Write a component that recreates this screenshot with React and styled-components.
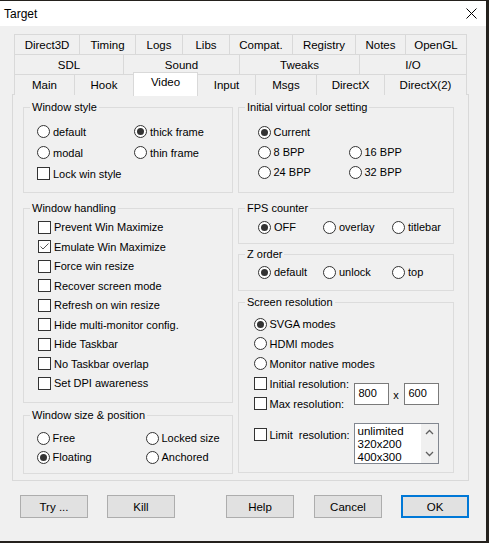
import React from 'react';
import styled, { createGlobalStyle } from 'styled-components';

const GlobalStyle = createGlobalStyle`
  html, body {
    margin: 0;
    padding: 0;
    background: #24211d;
  }
  body {
    font-family: "Liberation Sans", Arial, sans-serif;
    font-size: 11px;
    color: #000;
  }
  * { box-sizing: border-box; }
`;

const Window = styled.div`
  width: 486px;
  height: 540px;
  margin-top: 1px;
  background: #f0f0f0;
  display: flex;
  flex-direction: column;
`;

const TitleBar = styled.div`
  height: 25px;
  background: #fff;
  display: flex;
  align-items: center;
  justify-content: space-between;
  padding: 0 9px 0 4px;
`;

const Title = styled.span`
  font-size: 12px;
  color: #000;
`;

const Body = styled.div`
  flex: 1;
  padding: 8px 0 0 12px;
  display: flex;
  flex-direction: column;
`;

const TabStrip = styled.div`
  margin-left: 2px;
  display: flex;
  flex-direction: column;
`;

const TabRow = styled.div`
  display: flex;
  margin-bottom: -1px;
`;

const Tab = styled.div`
  width: ${(p) => p.$w + 1}px;
  height: ${(p) => (p.$active ? 24 : 21)}px;
  margin-left: -1px;
  margin-top: ${(p) => (p.$active ? -2 : 0)}px;
  margin-bottom: ${(p) => (p.$active ? -2 : 0)}px;
  border: 1px solid #d9d9d9;
  border-bottom: ${(p) => (p.$last ? 'none' : '1px solid #d9d9d9')};
  background: ${(p) => (p.$active ? '#fff' : '#f0f0f0')};
  position: relative;
  z-index: ${(p) => (p.$active ? 2 : 1)};
  display: flex;
  align-items: ${(p) => (p.$active ? 'flex-start' : 'center')};
  padding-top: ${(p) => (p.$active ? 3 : 0)}px;
  justify-content: center;
  font-size: 11.5px;
  &:first-child { margin-left: 0; }
`;

const Page = styled.div`
  width: 457px;
  height: 387px;
  border: 1px solid #d9d9d9;
  padding: 5px 0 0 10px;
  display: flex;
  gap: 5px;
  position: relative;
  z-index: 0;
`;

const Column = styled.div`
  width: ${(p) => p.$w}px;
  display: flex;
  flex-direction: column;
`;

const Group = styled.fieldset`
  margin: ${(p) => p.$mt || 0}px 0 0 0;
  padding: 0;
  border: 1px solid #dcdcdc;
  min-width: 0;
`;

const Legend = styled.legend`
  margin-left: 6px;
  padding: 0 2px;
  line-height: 14px;
  font-size: 11px;
`;

const GroupBody = styled.div`
  padding: ${(p) => p.$pt}px 0 ${(p) => p.$pb}px ${(p) => p.$pl}px;
`;

const Grid = styled.div`
  display: grid;
  grid-template-columns: ${(p) => p.$cols};
`;

const Option = styled.label`
  display: flex;
  align-items: center;
  gap: 3px;
  height: ${(p) => p.$h || 20}px;
  white-space: nowrap;
  font-size: 11px;
`;

const RadioCircle = styled.span`
  width: 13px;
  height: 13px;
  border: 1px solid #333;
  border-radius: 50%;
  background: #fff;
  display: grid;
  place-items: center;
  flex: none;
  &::after {
    content: '';
    width: 7px;
    height: 7px;
    border-radius: 50%;
    background: ${(p) => (p.$on ? '#333' : 'transparent')};
  }
`;

const Box = styled.span`
  width: 13px;
  height: 13px;
  border: 1px solid #333;
  background: #fff;
  display: grid;
  place-items: center;
  flex: none;
`;

const Radio = ({ on, children, h }) => (
  <Option $h={h}>
    <RadioCircle $on={on} />
    {children}
  </Option>
);

const Check = ({ on, children, h }) => (
  <Option $h={h}>
    <Box>
      {on && (
        <svg width="11" height="11" viewBox="0 0 11 11">
          <path d="M1.5 5.5 L4 8 L9.5 2.5" fill="none" stroke="#555" strokeWidth="1" />
        </svg>
      )}
    </Box>
    {children}
  </Option>
);

const ResBlock = styled.div`
  display: flex;
  align-items: center;
`;

const ResLabels = styled.div`
  width: 100px;
  display: flex;
  flex-direction: column;
`;

const NumField = styled.div`
  width: 35px;
  height: 22px;
  border: 1px solid #7a7a7a;
  background: #fff;
  padding: 3px 0 0 4px;
  font-size: 11px;
`;

const Times = styled.span`
  width: 15px;
  text-align: center;
  padding-top: 3px;
  font-size: 11px;
`;

const LimitRow = styled.div`
  display: flex;
  align-items: flex-start;
  margin-top: 9px;
`;

const LimitLabel = styled.div`
  width: 100px;
  display: flex;
  align-items: center;
  height: 24px;
`;

const ListBox = styled.div`
  width: 85px;
  height: 41px;
  border: 1px solid #828790;
  background: #fff;
  display: flex;
  overflow: hidden;
`;

const ListItems = styled.div`
  flex: 1;
  padding: 1px 0 0 3px;
  line-height: 13.3px;
  font-size: 11.5px;
`;

const ScrollBar = styled.div`
  width: 17px;
  background: #f0f0f0;
  display: flex;
  flex-direction: column;
  justify-content: space-between;
  align-items: center;
  padding: 5px 0 6px;
`;

const ButtonBar = styled.div`
  display: flex;
  margin-top: 14px;
  padding-left: 8px;
`;

const Button = styled.button`
  width: 68px;
  height: 23px;
  margin-left: ${(p) => p.$ml || 0}px;
  background: #e1e1e1;
  border: ${(p) => (p.$default ? '2px solid #0078d7' : '1px solid #adadad')};
  font-family: "Liberation Sans", Arial, sans-serif;
  font-size: 11.5px;
  color: #000;
  padding: 0;
`;

const row1 = [
  ['Direct3D', 65], ['Timing', 56], ['Logs', 47], ['Libs', 47],
  ['Compat.', 63], ['Registry', 63], ['Notes', 50], ['OpenGL', 61],
];
const row2 = [['SDL', 109], ['Sound', 116], ['Tweaks', 120], ['I/O', 107]];
const row3 = [
  ['Main', 60], ['Hook', 59], ['Video', 64], ['Input', 58],
  ['Msgs', 61], ['DirectX', 68], ['DirectX(2)', 82],
];

const handling = [
  ['Prevent Win Maximize', false],
  ['Emulate Win Maximize', true],
  ['Force win resize', false],
  ['Recover screen mode', false],
  ['Refresh on win resize', false],
  ['Hide multi-monitor config.', false],
  ['Hide Taskbar', false],
  ['No Taskbar overlap', false],
  ['Set DPI awareness', false],
];

const Chevron = ({ up }) => (
  <svg width="9" height="6" viewBox="0 0 9 6">
    <path
      d={up ? 'M1 5 L4.5 1.5 L8 5' : 'M1 1 L4.5 4.5 L8 1'}
      fill="none"
      stroke="#606060"
      strokeWidth="1.3"
    />
  </svg>
);

export default function App() {
  return (
    <>
      <GlobalStyle />
      <Window>
        <TitleBar>
          <Title>Target</Title>
          <svg width="11" height="11" viewBox="0 0 11 11">
            <path d="M0.5 0.5 L10.5 10.5 M10.5 0.5 L0.5 10.5" stroke="#000" strokeWidth="1" />
          </svg>
        </TitleBar>
        <Body>
          <TabStrip>
            <TabRow>
              {row1.map(([t, w]) => (
                <Tab key={t} $w={w}>{t}</Tab>
              ))}
            </TabRow>
            <TabRow>
              {row2.map(([t, w]) => (
                <Tab key={t} $w={w}>{t}</Tab>
              ))}
            </TabRow>
            <TabRow>
              {row3.map(([t, w]) => (
                <Tab key={t} $w={w} $last $active={t === 'Video'}>{t}</Tab>
              ))}
            </TabRow>
          </TabStrip>

          <Page>
            <Column $w={210}>
              <Group>
                <Legend>Window style</Legend>
                <GroupBody $pt={7} $pb={8} $pl={13}>
                  <Grid $cols="97px auto">
                    <Radio h={21}>default</Radio>
                    <Radio h={21} on>thick frame</Radio>
                    <Radio h={21}>modal</Radio>
                    <Radio h={21}>thin frame</Radio>
                  </Grid>
                  <Check h={21}>Lock win style</Check>
                </GroupBody>
              </Group>

              <Group $mt={8}>
                <Legend>Window handling</Legend>
                <GroupBody $pt={2.25} $pb={9.25} $pl={14}>
                  {handling.map(([t, on]) => (
                    <Check key={t} on={on} h={19.5}>{t}</Check>
                  ))}
                </GroupBody>
              </Group>

              <Group $mt={5}>
                <Legend>Window size &amp; position</Legend>
                <GroupBody $pt={6.5} $pb={6.5} $pl={12.5}>
                  <Grid $cols="109px auto">
                    <Radio h={19}>Free</Radio>
                    <Radio h={19}>Locked size</Radio>
                    <Radio h={19} on>Floating</Radio>
                    <Radio h={19}>Anchored</Radio>
                  </Grid>
                </GroupBody>
              </Group>
            </Column>

            <Column $w={216}>
              <Group>
                <Legend>Initial virtual color setting</Legend>
                <GroupBody $pt={8} $pb={10} $pl={18.5}>
                  <Radio on>Current</Radio>
                  <Grid $cols="91px auto">
                    <Radio>8 BPP</Radio>
                    <Radio>16 BPP</Radio>
                    <Radio>24 BPP</Radio>
                    <Radio>32 BPP</Radio>
                  </Grid>
                </GroupBody>
              </Group>

              <Group $mt={8}>
                <Legend>FPS counter</Legend>
                <GroupBody $pt={2} $pb={6} $pl={19}>
                  <Grid $cols="65px 69px auto">
                    <Radio on>OFF</Radio>
                    <Radio>overlay</Radio>
                    <Radio>titlebar</Radio>
                  </Grid>
                </GroupBody>
              </Group>

              <Group $mt={3}>
                <Legend>Z order</Legend>
                <GroupBody $pt={1} $pb={8} $pl={19}>
                  <Grid $cols="65px 69px auto">
                    <Radio on>default</Radio>
                    <Radio>unlock</Radio>
                    <Radio>top</Radio>
                  </Grid>
                </GroupBody>
              </Group>

              <Group $mt={4}>
                <Legend>Screen resolution</Legend>
                <GroupBody $pt={5} $pb={8} $pl={14.5}>
                  <Radio on>SVGA modes</Radio>
                  <Radio h={19.5}>HDMI modes</Radio>
                  <Radio>Monitor native modes</Radio>
                  <ResBlock>
                    <ResLabels>
                      <Check>Initial resolution:</Check>
                      <Check>Max resolution:</Check>
                    </ResLabels>
                    <NumField>800</NumField>
                    <Times>x</Times>
                    <NumField>600</NumField>
                  </ResBlock>
                  <LimitRow>
                    <LimitLabel>
                      <Check>Limit&nbsp; resolution:</Check>
                    </LimitLabel>
                    <ListBox>
                      <ListItems>
                        <div>unlimited</div>
                        <div>320x200</div>
                        <div>400x300</div>
                      </ListItems>
                      <ScrollBar>
                        <Chevron up />
                        <Chevron />
                      </ScrollBar>
                    </ListBox>
                  </LimitRow>
                </GroupBody>
              </Group>
            </Column>
          </Page>

          <ButtonBar>
            <Button>Try ...</Button>
            <Button $ml={19}>Kill</Button>
            <Button $ml={51}>Help</Button>
            <Button $ml={20}>Cancel</Button>
            <Button $ml={19} $default>OK</Button>
          </ButtonBar>
        </Body>
      </Window>
    </>
  );
}
